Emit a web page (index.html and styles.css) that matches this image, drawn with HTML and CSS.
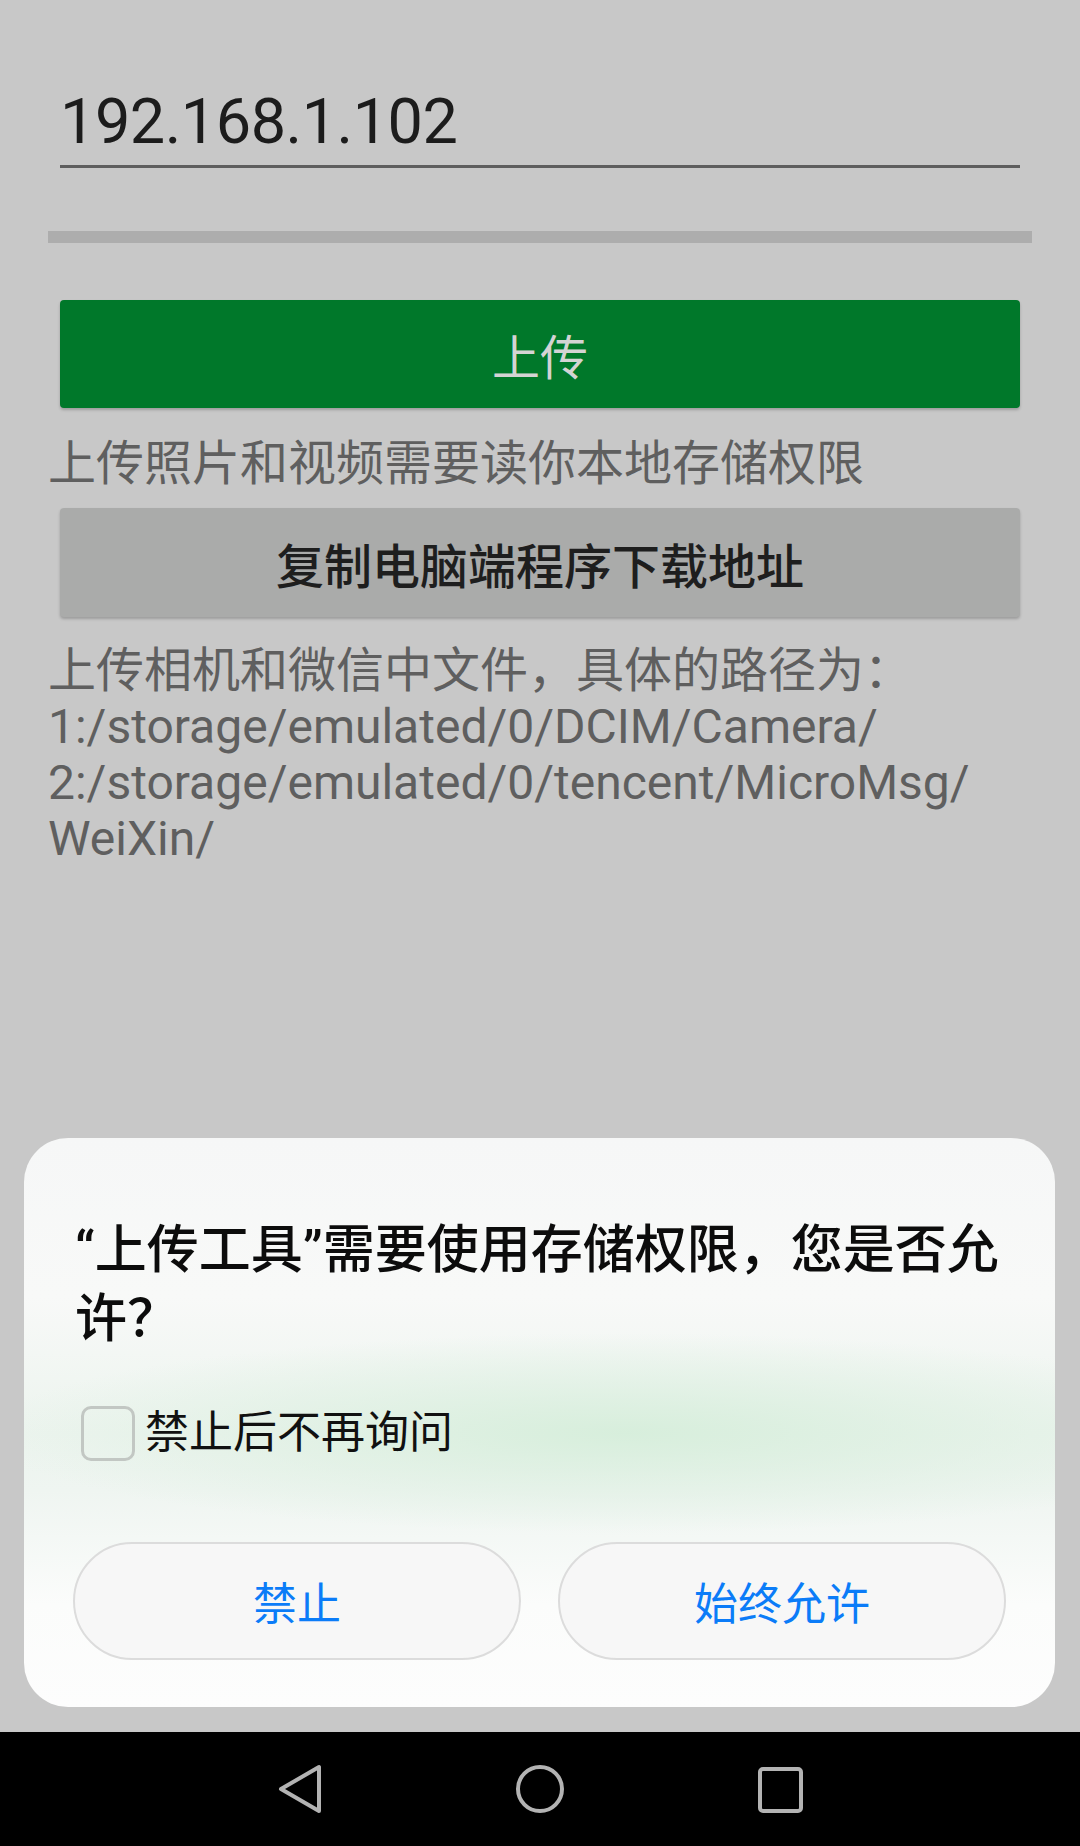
FILE: index.html
```html
<!DOCTYPE html>
<html lang="zh-CN">
<head>
<meta charset="utf-8">
<title>上传工具</title>
<link rel="stylesheet" href="styles.css">
</head>
<body>
<div class="screen">
  <main class="content">
    <div class="ip-field">192.168.1.102</div>
    <div class="progress"></div>
    <div class="btn btn-upload">上传</div>
    <p class="hint">上传照片和视频需要读你本地存储权限</p>
    <div class="btn btn-copy">复制电脑端程序下载地址</div>
    <p class="paths">上传相机和微信中文件，具体的路径为：<br>1:/storage/emulated/0/DCIM/Camera/<br>2:/storage/emulated/0/tencent/MicroMsg/<br>WeiXin/</p>
  </main>

  <div class="dialog">
    <div class="dialog-title">“上传工具”需要使用存储权限，您是否允许？</div>
    <label class="dialog-check"><span class="checkbox"></span><span>禁止后不再询问</span></label>
    <div class="dialog-actions">
      <div class="pill">禁止</div>
      <div class="pill">始终允许</div>
    </div>
  </div>

  <nav class="navbar">
    <svg width="1080" height="114" viewBox="0 0 1080 114">
      <g fill="none" stroke="#b3b3b3" stroke-width="4" stroke-linejoin="round" stroke-linecap="round">
        <path d="M319 35 L319 79 L281 57 Z"/>
        <circle cx="540" cy="57" r="22"/>
        <rect x="760" y="37" width="41" height="42" rx="3"/>
      </g>
    </svg>
  </nav>
</div>
</body>
</html>
```

FILE: styles.css
```css
html, body {
  margin: 0;
  padding: 0;
}

body {
  background: #c8c8c8;
  font-family: Roboto, "Noto Sans CJK SC", sans-serif;
}

.screen {
  position: relative;
  width: 1080px;
  height: 1846px;
  display: flex;
  flex-direction: column;
  overflow: hidden;
}

.content {
  flex: 1;
  padding: 0 48px;
}

.ip-field {
  margin: 85px 12px 0;
  font-size: 63px;
  line-height: 74px;
  letter-spacing: -0.5px;
  color: #1c1c1c;
  padding-bottom: 6px;
  border-bottom: 3px solid #5e5e5e;
}

.progress {
  margin-top: 63px;
  height: 12px;
  background: #adadad;
}

.btn {
  margin: 0 12px;
  display: flex;
  align-items: center;
  justify-content: center;
  border-radius: 4px;
  font-size: 48px;
  box-shadow: 0 2px 3px rgba(0, 0, 0, 0.22);
}

.btn-upload {
  margin-top: 57px;
  height: 108px;
  background: #00782a;
  color: #d4d4d4;
}

.btn-copy {
  margin-top: 16px;
  height: 109px;
  background: #aaabaa;
  color: #1e1e1e;
  font-weight: 500;
}

.hint,
.paths {
  margin: 0;
  font-size: 48px;
  line-height: 56px;
  color: #5f5f5f;
}

.hint {
  margin-top: 28px;
}

.paths {
  margin-top: 26px;
}

.dialog {
  position: absolute;
  left: 24px;
  top: 1138px;
  width: 1031px;
  height: 569px;
  box-sizing: border-box;
  border-radius: 44px;
  padding: 78px 49px 0;
  background:
    radial-gradient(ellipse 640px 100px at 600px 295px, rgba(214, 238, 219, 0.95), rgba(222, 240, 226, 0.55) 60%, rgba(240, 246, 242, 0) 100%),
    linear-gradient(180deg, #f6f7f7 0%, #f8f9f8 28%, #ecf4ee 52%, #eff5f1 62%, #fbfcfb 82%, #fdfdfd 100%);
}

.dialog-title {
  padding: 0 2px;
  font-size: 52px;
  line-height: 69px;
  color: #0c0c0c;
  font-weight: 500;
}

.dialog-check {
  display: flex;
  align-items: center;
  margin-top: 51px;
  padding-left: 8px;
  font-size: 44px;
  line-height: 56px;
  color: #111111;
}

.checkbox {
  width: 54px;
  height: 55px;
  box-sizing: border-box;
  border: 3px solid #c2c7c3;
  border-radius: 10px;
  margin-right: 10px;
}

.dialog-actions {
  display: flex;
  gap: 37px;
  margin-top: 81px;
}

.pill {
  flex: 1;
  height: 118px;
  box-sizing: border-box;
  border: 2px solid #dcdcdc;
  border-radius: 59px;
  background: #f7f7f7;
  display: flex;
  align-items: center;
  justify-content: center;
  font-size: 44px;
  color: #0b7cf8;
}

.navbar {
  height: 114px;
  background: #000000;
  display: flex;
}
```
